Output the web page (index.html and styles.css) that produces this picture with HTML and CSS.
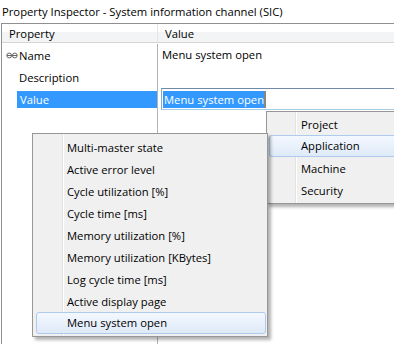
FILE: index.html
```html
<!DOCTYPE html>
<html>
<head>
<title>Property Inspector</title>
<link rel="stylesheet" href="styles.css">
</head>
<body>

<div class="title">Property Inspector - System information channel (SIC)</div>

<div class="grid">
    <div class="head">
        <div class="hcell prop-col">Property</div>
        <div class="hcell">Value</div>
    </div>
    <div class="rows">
        <div class="row">
            <div class="prop">
                <svg class="link" width="12" height="7" viewBox="0 0 12 7">
                    <circle cx="3.2" cy="3.5" r="2.4" fill="none" stroke="#666" stroke-width="1"/>
                    <circle cx="8.8" cy="3.5" r="2.4" fill="none" stroke="#666" stroke-width="1"/>
                    <line x1="1" y1="3.5" x2="11" y2="3.5" stroke="#666" stroke-width="1"/>
                </svg>
                <span class="ptext linked">Name</span>
            </div>
            <div class="val">Menu system open</div>
        </div>
        <div class="row">
            <div class="prop"><span class="ptext">Description</span></div>
            <div class="val"></div>
        </div>
        <div class="row">
            <div class="prop"><span class="ptext selected">Value</span></div>
            <div class="val editing">
                <div class="editbox"><span class="seltext">Menu system open</span><span class="caret"></span></div>
            </div>
        </div>
        <div class="row filler">
            <div class="prop"></div>
            <div class="val"></div>
        </div>
    </div>
</div>

<div class="menu submenu">
    <div class="item">Project</div>
    <div class="item hot">Application</div>
    <div class="item">Machine</div>
    <div class="item">Security</div>
</div>

<div class="menu mainmenu">
    <div class="item">Multi-master state</div>
    <div class="item">Active error level</div>
    <div class="item">Cycle utilization [%]</div>
    <div class="item">Cycle time [ms]</div>
    <div class="item">Memory utilization [%]</div>
    <div class="item">Memory utilization [KBytes]</div>
    <div class="item">Log cycle time [ms]</div>
    <div class="item">Active display page</div>
    <div class="item hot">Menu system open</div>
</div>

</body>
</html>
```

FILE: styles.css
```css
html, body {
    margin: 0;
    padding: 0;
    height: 344px;
    overflow: hidden;
    background: white;
}

body {
    font-family: "Open Sans", "Noto Sans", sans-serif;
    font-size: 11.25px;
    color: #000;
    position: relative;
}

.title {
    height: 23px;
    line-height: 23px;
    padding-left: 2px;
    white-space: nowrap;
}

.grid {
    margin-left: 1px;
    height: 320px;
    border-top: 1px solid #8e8f8f;
    border-left: 1px solid #8e8f8f;
    display: flex;
    flex-direction: column;
}

.head {
    display: flex;
    height: 18px;
    border-bottom: 1px solid #d5d5d5;
    background: linear-gradient(#fff 0, #fff 8px, #f3f4f6 8px, #f3f4f6 100%);
}

.hcell {
    line-height: 19px;
    padding-left: 7px;
}

.prop-col {
    width: 148px;
    border-right: 1px solid #e3e5e8;
}

.rows {
    flex: 1;
    display: flex;
    flex-direction: column;
    padding-top: 1px;
}

.row {
    display: flex;
    height: 22px;
}

.row.filler {
    flex: 1;
}

.prop {
    width: 155px;
    border-right: 1px solid #b4b4b4;
    display: flex;
    align-items: center;
}

.link {
    margin-left: 4px;
}

.ptext {
    padding-left: 3px;
    line-height: 17px;
}

.prop .ptext:first-child {
    margin-left: 14px;
}

.ptext.linked {
    padding-left: 1px;
}

.ptext.selected {
    background: #3399ff;
    color: white;
    flex: 1;
    height: 17px;
    margin-left: 15px !important;
}

.val {
    flex: 1;
    line-height: 22px;
    padding-left: 4px;
    white-space: nowrap;
}

.val.editing {
    padding-left: 3px;
}

.editbox {
    height: 20px;
    border: 1px solid #a6cbe6;
    border-top-color: #6f8ba8;
    border-left-color: #8ea6bf;
    border-right: none;
    display: flex;
    align-items: center;
    padding-left: 1px;
}

.seltext {
    background: #3399ff;
    color: white;
    line-height: 17px;
    padding: 0 1px;
}

.caret {
    width: 1px;
    height: 17px;
    background: #d97a00;
}

.menu {
    position: absolute;
    background-color: #f0f0f0;
    border: 1px solid #979797;
    box-shadow: 3px 3px 3px rgba(0, 0, 0, 0.3);
}

.mainmenu {
    left: 32px;
    top: 133px;
    width: 230px;
    padding: 2px 1px 2px 3px;
    background-image: linear-gradient(to right, transparent 29px, #e2e3e3 29px, #e2e3e3 30px, #fff 30px, #fff 31px, transparent 31px);
}

.submenu {
    left: 266px;
    top: 111px;
    width: 125px;
    border-right: none;
    padding: 1px 0 2px 2px;
    background-image: linear-gradient(to right, transparent 28px, #e2e3e3 28px, #e2e3e3 29px, #fff 29px, #fff 30px, transparent 30px);
}

.item {
    height: 22px;
    line-height: 22px;
    padding-left: 31px;
    white-space: nowrap;
    box-sizing: border-box;
    border: 1px solid transparent;
    border-radius: 3px;
}

.submenu .item.hot {
    border-right: none;
    border-radius: 3px 0 0 3px;
}

.item.hot {
    border-color: #aecbef;
    background: linear-gradient(#f3f8fe, #dfeaf8);
    line-height: 20px;
}

.mainmenu .item {
    padding-left: 30px;
}
```
